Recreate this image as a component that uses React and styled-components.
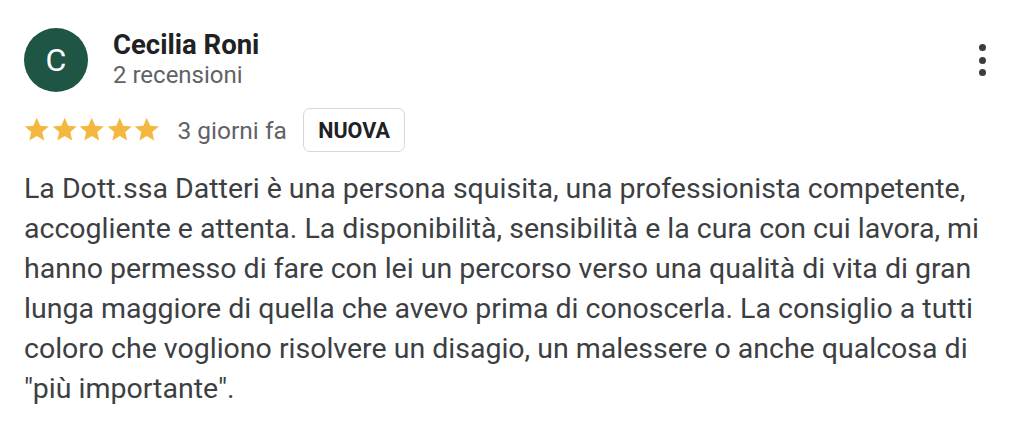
import React from 'react'
import styled, { createGlobalStyle } from 'styled-components'

const Global = createGlobalStyle`
  body {
    margin: 0;
    background: #ffffff;
    font-family: Roboto, "Liberation Sans", Arial, sans-serif;
  }
`

const Card = styled.div`
  position: relative;
  width: 1022px;
  height: 422px;
  box-sizing: border-box;
  padding: 28px 38px 0 24px;
  background: #fff;
`

const Header = styled.div`
  display: flex;
  align-items: flex-start;
  gap: 25px;
`

const Avatar = styled.div`
  width: 64px;
  height: 64px;
  border-radius: 50%;
  background: #1e5545;
  color: #fff;
  display: flex;
  align-items: center;
  justify-content: center;
  font-size: 32px;
  font-weight: 400;
  flex-shrink: 0;
`

const Who = styled.div`
  display: flex;
  flex-direction: column;
  padding-top: 2px;
`

const Name = styled.div`
  font-size: 27.5px;
  font-weight: 700;
  color: #202124;
  line-height: 30px;
`

const Sub = styled.div`
  font-size: 24px;
  color: #5f6368;
  line-height: 30px;
`

const Menu = styled.button`
  position: absolute;
  top: 40px;
  right: 28px;
  width: 24px;
  height: 40px;
  border: none;
  background: none;
  padding: 0;
  display: flex;
  flex-direction: column;
  align-items: center;
  justify-content: center;
  gap: 5.5px;
`

const Dot = styled.span`
  width: 7px;
  height: 7px;
  border-radius: 50%;
  background: #3c3c3c;
`

const Meta = styled.div`
  display: flex;
  align-items: center;
  margin-top: 16px;
  height: 44px;
`

const Stars = styled.div`
  display: flex;
  margin-left: -1px;
  margin-right: 17px;
`

const When = styled.span`
  font-size: 24.5px;
  color: #5f6368;
  margin-right: 16px;
`

const Badge = styled.span`
  box-sizing: border-box;
  height: 44px;
  padding: 0 14.5px;
  display: inline-flex;
  align-items: center;
  border: 1.5px solid #d6d6d6;
  border-radius: 7px;
  font-size: 21.5px;
  font-weight: 700;
  color: #202124;
`

const Body = styled.p`
  margin: 17px 0 0;
  font-size: 28.5px;
  line-height: 40px;
  color: #3c4043;
  max-width: 962px;
`

const Star = () => (
  <svg width="27.5" height="27.5" viewBox="0 0 24 24">
    <path
      fill="#f4b73f"
      d="M12 1.6l3 6.9 7.5.6-5.7 4.9 1.7 7.4L12 17.5l-6.5 3.9 1.7-7.4L1.5 9.1 9 8.5z"
    />
  </svg>
)

export default function App() {
  return (
    <>
      <Global />
      <Card>
        <Header>
          <Avatar>C</Avatar>
          <Who>
            <Name>Cecilia Roni</Name>
            <Sub>2 recensioni</Sub>
          </Who>
        </Header>
        <Menu aria-label="Altre opzioni">
          <Dot />
          <Dot />
          <Dot />
        </Menu>
        <Meta>
          <Stars>
            {[0, 1, 2, 3, 4].map((i) => (
              <Star key={i} />
            ))}
          </Stars>
          <When>3 giorni fa</When>
          <Badge>NUOVA</Badge>
        </Meta>
        <Body>
          La Dott.ssa Datteri è una persona squisita, una professionista competente,
          accogliente e attenta. La disponibilità, sensibilità e la cura con cui lavora, mi
          hanno permesso di fare con lei un percorso verso una qualità di vita di gran
          lunga maggiore di quella che avevo prima di conoscerla. La consiglio a tutti
          coloro che vogliono risolvere un disagio, un malessere o anche qualcosa di
          "più importante".
        </Body>
      </Card>
    </>
  )
}
